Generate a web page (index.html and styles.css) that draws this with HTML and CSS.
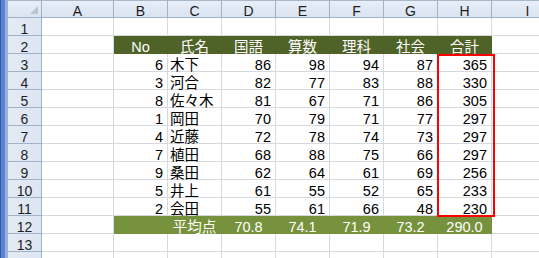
FILE: index.html
```html
<!DOCTYPE html>
<html lang="ja">
<head>
<meta charset="utf-8">
<title>成績表</title>
<link rel="stylesheet" href="styles.css">
</head>
<body>
<div class="window">
  <div class="frame-edge"></div>
  <div class="sheet">
    <div class="ribbon-edge"></div>
    <div class="grid">
      <!-- column headers -->
      <div class="corner"><span class="corner-mark"></span></div>
      <div class="col-hdr">A</div>
      <div class="col-hdr">B</div>
      <div class="col-hdr">C</div>
      <div class="col-hdr">D</div>
      <div class="col-hdr">E</div>
      <div class="col-hdr">F</div>
      <div class="col-hdr">G</div>
      <div class="col-hdr">H</div>
      <div class="col-hdr">I</div>

      <!-- row 1 -->
      <div class="row-hdr">1</div>
      <div class="cell"></div><div class="cell"></div><div class="cell"></div><div class="cell"></div><div class="cell"></div><div class="cell"></div><div class="cell"></div><div class="cell"></div><div class="cell"></div>

      <!-- row 2: table heading -->
      <div class="row-hdr">2</div>
      <div class="cell"></div>
      <div class="cell title">No</div>
      <div class="cell title">氏名</div>
      <div class="cell title">国語</div>
      <div class="cell title">算数</div>
      <div class="cell title">理科</div>
      <div class="cell title">社会</div>
      <div class="cell title">合計</div>
      <div class="cell"></div>

      <div class="row-hdr">3</div>
      <div class="cell"></div>
      <div class="cell num">6</div><div class="cell name">木下</div>
      <div class="cell num">86</div><div class="cell num">98</div><div class="cell num">94</div><div class="cell num">87</div><div class="cell num">365</div>
      <div class="cell"></div>

      <div class="row-hdr">4</div>
      <div class="cell"></div>
      <div class="cell num">3</div><div class="cell name">河合</div>
      <div class="cell num">82</div><div class="cell num">77</div><div class="cell num">83</div><div class="cell num">88</div><div class="cell num">330</div>
      <div class="cell"></div>

      <div class="row-hdr">5</div>
      <div class="cell"></div>
      <div class="cell num">8</div><div class="cell name">佐々木</div>
      <div class="cell num">81</div><div class="cell num">67</div><div class="cell num">71</div><div class="cell num">86</div><div class="cell num">305</div>
      <div class="cell"></div>

      <div class="row-hdr">6</div>
      <div class="cell"></div>
      <div class="cell num">1</div><div class="cell name">岡田</div>
      <div class="cell num">70</div><div class="cell num">79</div><div class="cell num">71</div><div class="cell num">77</div><div class="cell num">297</div>
      <div class="cell"></div>

      <div class="row-hdr">7</div>
      <div class="cell"></div>
      <div class="cell num">4</div><div class="cell name">近藤</div>
      <div class="cell num">72</div><div class="cell num">78</div><div class="cell num">74</div><div class="cell num">73</div><div class="cell num">297</div>
      <div class="cell"></div>

      <div class="row-hdr">8</div>
      <div class="cell"></div>
      <div class="cell num">7</div><div class="cell name">植田</div>
      <div class="cell num">68</div><div class="cell num">88</div><div class="cell num">75</div><div class="cell num">66</div><div class="cell num">297</div>
      <div class="cell"></div>

      <div class="row-hdr">9</div>
      <div class="cell"></div>
      <div class="cell num">9</div><div class="cell name">桑田</div>
      <div class="cell num">62</div><div class="cell num">64</div><div class="cell num">61</div><div class="cell num">69</div><div class="cell num">256</div>
      <div class="cell"></div>

      <div class="row-hdr">10</div>
      <div class="cell"></div>
      <div class="cell num">5</div><div class="cell name">井上</div>
      <div class="cell num">61</div><div class="cell num">55</div><div class="cell num">52</div><div class="cell num">65</div><div class="cell num">233</div>
      <div class="cell"></div>

      <div class="row-hdr">11</div>
      <div class="cell"></div>
      <div class="cell num">2</div><div class="cell name">会田</div>
      <div class="cell num">55</div><div class="cell num">61</div><div class="cell num">66</div><div class="cell num">48</div><div class="cell num">230</div>
      <div class="cell"></div>

      <!-- row 12: averages -->
      <div class="row-hdr">12</div>
      <div class="cell"></div>
      <div class="cell avg"></div>
      <div class="cell avg">平均点</div>
      <div class="cell avg">70.8</div>
      <div class="cell avg">74.1</div>
      <div class="cell avg">71.9</div>
      <div class="cell avg">73.2</div>
      <div class="cell avg">290.0</div>
      <div class="cell"></div>

      <div class="row-hdr">13</div>
      <div class="cell"></div><div class="cell"></div><div class="cell"></div><div class="cell"></div><div class="cell"></div><div class="cell"></div><div class="cell"></div><div class="cell"></div><div class="cell"></div>

      <!-- next row, only its top edge shows -->
      <div class="row-hdr"></div>
      <div class="cell"></div><div class="cell"></div><div class="cell"></div><div class="cell"></div><div class="cell"></div><div class="cell"></div><div class="cell"></div><div class="cell"></div><div class="cell"></div>

      <!-- rectangle shape drawn over the totals column -->
      <div class="highlight-box"></div>
    </div>
  </div>
</div>
</body>
</html>
```

FILE: styles.css
```css
* {
  box-sizing: border-box;
}

html,
body {
  margin: 0;
  padding: 0;
  background: #ffffff;
  overflow: hidden;
}

body {
  width: 539px;
  height: 258px;
  font-family: "Liberation Sans", "Noto Sans CJK JP", sans-serif;
  color: #000000;
}

.window {
  display: flex;
  width: 539px;
  height: 258px;
  overflow: hidden;
}

/* blue window edge on the left */
.frame-edge {
  flex: 0 0 7px;
  background: linear-gradient(to right, #35589f 0 1px, #5a82cf 1px 5px, #94b1e2 5px 7px);
}

.sheet {
  flex: 0 0 auto;
  display: flex;
  flex-direction: column;
}

/* bottom edge of the formula bar */
.ribbon-edge {
  height: 5px;
  background: #e8ecf2;
  border-bottom: 1px solid #a9b7c9;
}

.grid {
  position: relative;
  display: grid;
  grid-template-columns: 35px 72px repeat(7, 54px) 72px;
  grid-template-rows: 17px repeat(14, 18px);
}

/* headers */
.corner,
.col-hdr,
.row-hdr {
  background: linear-gradient(#e7eef8, #dae3f0);
  border-right: 1px solid #9eb3cb;
  border-bottom: 1px solid #9eb3cb;
  font-size: 14px;
  line-height: 14px;
  color: #1e1e1e;
  text-align: center;
  white-space: nowrap;
}

.corner {
  border-left: 1px solid #9eb3cb;
  display: flex;
  justify-content: flex-end;
  align-items: flex-end;
  padding: 0 3px 3px 0;
}

.corner-mark {
  width: 8px;
  height: 8px;
  background: #b9c5d5;
  clip-path: polygon(100% 0, 100% 100%, 0 100%);
}

.col-hdr {
  padding-top: 3px;
}

.row-hdr {
  border-left: 1px solid #9eb3cb;
  background: linear-gradient(to right, #e4ebf5, #dde5f1);
  padding-top: 4px;
}

/* cells */
.cell {
  border-right: 1px solid #d6d9de;
  border-bottom: 1px solid #d6d9de;
  font-size: 14.5px;
  line-height: 14px;
  padding: 4px 3px 0 3px;
  white-space: nowrap;
  overflow: visible;
}

.num {
  text-align: right;
  padding-right: 4px;
}

.name {
  padding-left: 2px;
}

.title {
  background: #4f6228;
  border-color: #4f6228;
  color: #ffffff;
  text-align: center;
}

.avg {
  background: #76923c;
  border-color: #76923c;
  color: #ffffff;
  text-align: center;
}

/* red rectangle around the totals */
.highlight-box {
  position: absolute;
  left: 430px;
  top: 53px;
  width: 58px;
  height: 163px;
  border: 2px solid #ff0000;
  pointer-events: none;
}
```
